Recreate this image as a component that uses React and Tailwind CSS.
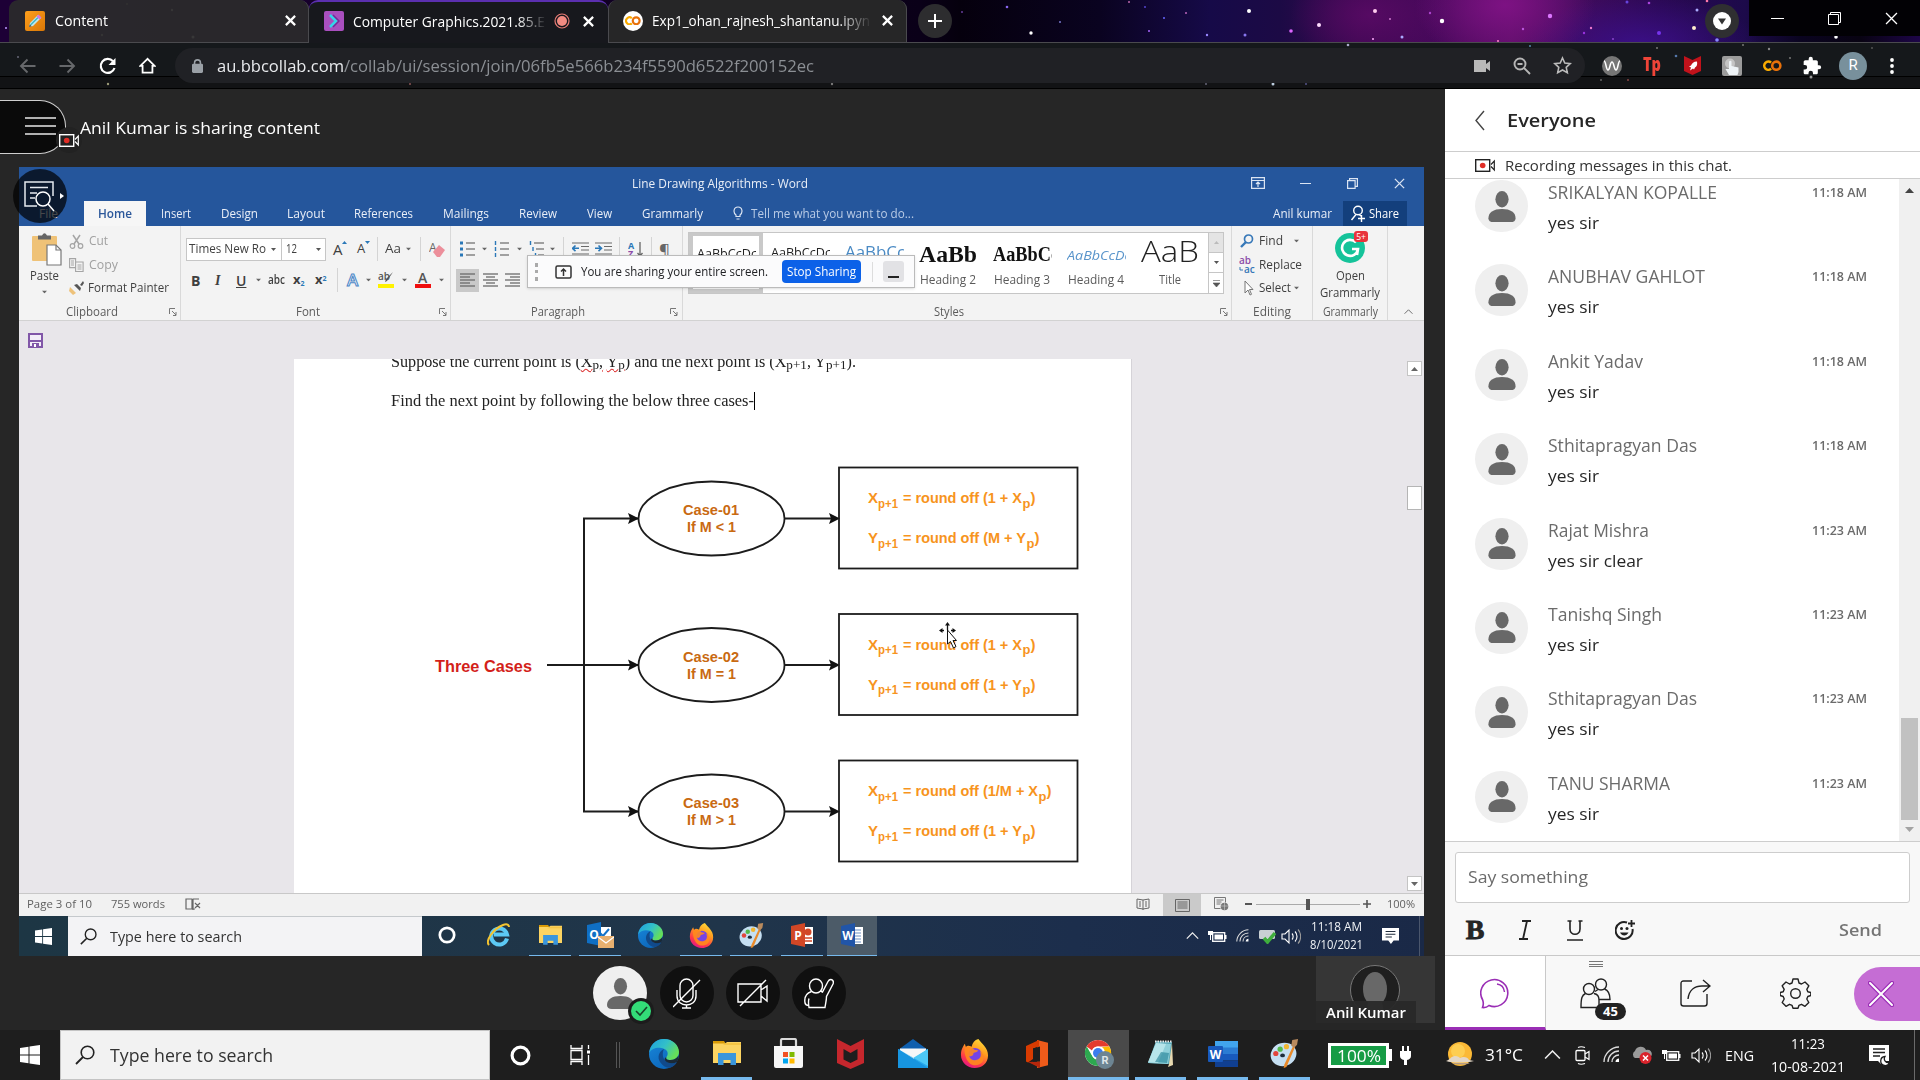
import React, { useLayoutEffect, useRef, useState } from "react";

/* Text set to an exact measure: the glyph run is condensed or widened to w. */
function Fit({ w, c = "", children }) {
  const ref = useRef(null);
  const [k, setK] = useState(1);
  useLayoutEffect(() => {
    if (ref.current && ref.current.offsetWidth) {
      setK(w / ref.current.getBoundingClientRect().width);
    }
  }, []);
  return (
    <span className={"block shrink-0 whitespace-nowrap text-left " + c} style={{ width: w }}>
      <span ref={ref} className="inline-block origin-left" style={{ transform: `scaleX(${k})` }}>
        {children}
      </span>
    </span>
  );
}

const Slot = ({ c = "", children }) => (
  <div className={"flex shrink-0 items-center justify-center " + c}>{children}</div>
);

const Svg = ({ w, h, vb, c = "", children }) => (
  <svg width={w} height={h} viewBox={vb || `0 0 ${w} ${h}`} className={"block shrink-0 " + c} fill="none">
    {children}
  </svg>
);

const Caret = ({ c = "" }) => (
  <Svg w={7} h={4} c={c}>
    <path d="M0 0h7L3.500 4z" fill="#666" />
  </Svg>
);

const CloseX = ({ s = 11, sw = 2, color = "#fff", c = "" }) => (
  <Svg w={s} h={s} vb="0 0 10 10" c={c}>
    <path d="M.8.8l8.400 8.400M9.200.8L.8 9.200" stroke={color} strokeWidth={sw} />
  </Svg>
);

/* ---------- application icons ---------- */
const WinLogo = ({ s }) => (
  <Svg w={s} h={s} vb="0 0 20 20">
    <path d="M0 3l8.500-1.200v7.700H0zM9.500 1.600L20 0v9.500H9.500zM0 10.500h8.500v7.700L0 17zM9.500 10.500H20V20L9.500 18.400z" fill="#fff" />
  </Svg>
);
const Magnifier = ({ s, color = "#222" }) => (
  <Svg w={s} h={s} vb="0 0 20 20">
    <circle cx="12.500" cy="7.500" r="6.300" stroke={color} strokeWidth="1.600" />
    <path d="M8 12L1 19" stroke={color} strokeWidth="1.800" />
  </Svg>
);
const Ring = ({ s }) => (
  <Svg w={s} h={s} vb="0 0 20 20">
    <circle cx="10" cy="10" r="8" stroke="#fff" strokeWidth="3" />
  </Svg>
);
const Edge = ({ s }) => (
  <Svg w={s} h={s} vb="0 0 30 30">
    <defs>
      <linearGradient id="eg1" x1="0" y1="0" x2="1" y2="0.5">
        <stop offset="0" stopColor="#1d9fe0" />
        <stop offset="0.55" stopColor="#33c0c8" />
        <stop offset="1" stopColor="#66df58" />
      </linearGradient>
      <linearGradient id="eg2" x1="0" y1="0" x2="0.7" y2="1">
        <stop offset="0" stopColor="#1988db" />
        <stop offset="1" stopColor="#0b64b8" />
      </linearGradient>
    </defs>
    <circle cx="15" cy="15" r="15" fill="url(#eg2)" />
    <path d="M0.2 14C1 6 7 0 15 0c9 0 15 6.500 15 13 0 5-4 8-8.500 8-4 0-5-1.500-4-3 1.500-2 1.500-4 .5-6C16 8.500 4 6 0.200 14z" fill="url(#eg1)" />
    <path d="M15 10c-5 2-7 8-4 13 3 4.500 8 7 12 5 2-1 4-3 5-5-4 2-9 1.500-11.500-1-3-3-3.500-8-1.500-12z" fill="#114a8b" />
    <path d="M17.500 18c-1 1.500 0 3 4 3 3.500 0 6.500-2 8-4.500 0 3-.5 4.500-1.500 6.500-4 2-9 1.500-11.500-1-1.500-1.600-1-3 1-4z" fill="#1e1e1e" fillOpacity=".85" />
  </Svg>
);
const Folder = ({ s }) => (
  <Svg w={s} h={s * 0.86} vb="0 0 28 24">
    <path d="M0 0h11l2 3H0z" fill="#d99a06" />
    <path d="M0 2.500h12l2-1.500h14v21H0z" fill="#fcd462" />
    <path d="M0 4h10l3-2h15v2z" fill="#e9a80e" opacity=".35" />
    <path d="M5 24V12h18v12h-5.500v-5h-7v5z" fill="#3a96dd" />
  </Svg>
);
const Store = () => (
  <Svg w={29} h={31}>
    <path d="M7 10V2.500Q7 1 8.500 1h12Q22 1 22 2.500V10" stroke="#d8d8d8" strokeWidth="2.200" />
    <path d="M0 8h29v20a2 2 0 0 1-2 2H2a2 2 0 0 1-2-2z" fill="#f6f6f6" />
    <path d="M9 14h5v5H9z" fill="#f25022" />
    <path d="M15.500 14h5v5h-5z" fill="#7fba00" />
    <path d="M9 20.500h5v5H9z" fill="#00a4ef" />
    <path d="M15.500 20.500h5v5h-5z" fill="#ffb900" />
  </Svg>
);
const Mcafee = () => (
  <Svg w={27} h={30}>
    <path d="M0 0l13.500 7L27 0v24l-13.500 6L0 24zM6.500 10v10.500l7 3.500 7-3.500V10l-7 4z" fill="#c6272d" fillRule="evenodd" />
  </Svg>
);
const MailApp = () => (
  <Svg w={30} h={29}>
    <path d="M0 11L15 0l15 11v4H0z" fill="#0f5fae" />
    <path d="M2 9.500h26V20H2z" fill="#f5f7f8" />
    <path d="M0 10l15 10L30 10v19H0z" fill="#27a9ec" />
    <path d="M0 10l30 17V10L15 19z" fill="#4cc8f6" />
    <path d="M0 10v19h30L13 18z" fill="#1795e0" />
  </Svg>
);
const Firefox = ({ s }) => (
  <Svg w={s} h={s} vb="0 0 30 30">
    <defs>
      <linearGradient id="ff1" x1="0.8" y1="0" x2="0.3" y2="1">
        <stop offset="0" stopColor="#ffe13a" />
        <stop offset="0.4" stopColor="#ff9a1f" />
        <stop offset="0.75" stopColor="#ff3b47" />
        <stop offset="1" stopColor="#e31587" />
      </linearGradient>
    </defs>
    <path d="M19 0c2 3 4 4 6 7 2.500 3 4 6 4 10 0 8-6.500 13-14 13S1 24 1 16.500C1 11 3 8 5 5l1 3 2-1c1 0 3 .5 4 1 1-4 3-7 7-8z" fill="url(#ff1)" />
    <circle cx="15.500" cy="16" r="6.800" fill="#7543e5" />
    <path d="M5 9c4-2 8 0 10 2l4 1c-2 2-3 2-5 2.500 0 3-3 4-4.500 3 1 4 5 5 8 4 4-1 5-5 3-9 5 3 5 9 2 12s-9 4-13 0C6 21 4 14 5 9z" fill="#ff8a1d" opacity=".9" />
  </Svg>
);
const Office = () => (
  <Svg w={24} h={28}>
    <path d="M12 0L23 2.800v22.400L12 28z" fill="#ee5b1a" />
    <path d="M1 6L14 0v6.500L8 8.500v10.500l-5 3.500-2-1z" fill="#d83b01" />
    <path d="M3 22l12-.5V28z" fill="#b7270b" />
    <path d="M8 8.500l7-2V21.500l-7 .3z" fill="#1e1e1e" />
  </Svg>
);
const Chrome = () => (
  <Svg w={30} h={30}>
    <circle cx="14" cy="14" r="13" fill="#fff" />
    <path d="M2.700 7.500A13 13 0 0 1 25.300 7.500H14a6.500 6.500 0 0 0-6 4z" fill="#e33b2e" />
    <path d="M2.700 7.500A13 13 0 0 0 14 27l5-8.500A6.500 6.500 0 0 1 8.500 17.500z" fill="#2da94f" />
    <path d="M25.300 7.500A13 13 0 0 1 14 27l5.500-9.500A6.500 6.500 0 0 0 18 8z" fill="#fdbd00" />
    <circle cx="14" cy="14" r="6.500" fill="#fff" />
    <circle cx="14" cy="14" r="5" fill="#3b7ded" />
    <circle cx="21" cy="21" r="9" fill="#6d8593" />
    <text x="21" y="25" textAnchor="middle" fontSize="11" fontWeight="700" fill="#dfe6ea" fontFamily="Roboto">R</text>
  </Svg>
);
const Notepad = () => (
  <Svg w={27} h={28}>
    <path d="M9 1l16 1-2 22-22-1z" fill="#59a8b8" />
    <path d="M9 3l15 1-3 20-20-1z" fill="#8fd0da" />
    <path d="M9 3l10 1-8 19-10-1z" fill="#c8eef2" opacity=".7" />
    <path d="M14 12l8 1-2 10-12-1z" fill="#1f7f95" opacity=".6" />
    <path d="M25 3l1 22-5 2 1-3z" fill="#e8d9b0" />
    <path d="M8 1.500h17" stroke="#e9e9e9" strokeWidth="2" strokeDasharray="1.500 1" />
  </Svg>
);
const WordNew = () => (
  <Svg w={30} h={26}>
    <path d="M7 0h23v7H7z" fill="#41a5ee" />
    <path d="M7 6.500h23V13H7z" fill="#2b7cd3" />
    <path d="M7 13h23v6.500H7z" fill="#185abd" />
    <path d="M7 19.500h23V26H7z" fill="#103f91" />
    <rect y="5" width="15" height="16" rx="1" fill="#185abd" />
    <text x="7.500" y="17.500" textAnchor="middle" fontSize="12" fontWeight="700" fill="#fff" fontFamily="Open Sans">W</text>
  </Svg>
);
const Paint = ({ s }) => (
  <Svg w={s} h={s} vb="0 0 30 30">
    <ellipse cx="14" cy="16" rx="13.500" ry="12" fill="#c5dff2" transform="rotate(-20 14 16)" />
    <ellipse cx="13" cy="17" rx="2.500" ry="2" fill="#1e2d3c" />
    <circle cx="6" cy="15" r="2.700" fill="#e2453c" />
    <circle cx="10.500" cy="10.500" r="2.700" fill="#54b948" />
    <circle cx="17" cy="8" r="2.700" fill="#f1b632" />
    <path d="M24 7l2 1-9 21-3 1 1-4z" fill="#e98a2a" />
    <path d="M23 1l6-1-1 6-3 3-3-2z" fill="#b98a5d" />
  </Svg>
);
const IE = () => (
  <Svg w={24} h={24}>
    <path d="M20 15.500A8 8 0 1 1 20 11.500H7" stroke="#5cc9f5" strokeWidth="4" />
    <path d="M2 22C-2 18 6 6 16 2c3-1.200 6-1 6 2" stroke="#f4c430" strokeWidth="2" />
  </Svg>
);
const OfficeOld = ({ letter, color, children }) => (
  <Svg w={23} h={24} vb="0 0 23 24">
    <path d="M11 4h11v17H11z" fill="#fff" />
    {children}
    <path d="M0 3l14-3v24L0 21z" fill={color} />
    <text x="7" y="16.500" textAnchor="middle" fontSize="12" fontWeight="700" fill="#fff" fontFamily="Open Sans">{letter}</text>
  </Svg>
);
const Person = ({ w, h, c = "" }) => (
  <Svg w={w} h={h} vb="0 0 28 32" c={c}>
    <ellipse cx="14" cy="8.500" rx="6.800" ry="8.500" fill="#686868" />
    <path d="M0 28c0-6 5-9.500 14-9.500S28 22 28 28c0 3-2 4-5 4H5c-3 0-5-1-5-4z" fill="#686868" />
  </Svg>
);
const Rec = ({ color = "#222", w = 20 }) => (
  <Svg w={w} h={w * 0.65} vb="0 0 20 13">
    <rect x=".7" y=".7" width="14" height="11.600" stroke={color} strokeWidth="1.400" />
    <path d="M16 5.500l3.300-3.500v9L16 7.500" stroke={color} strokeWidth="1.200" />
    <circle cx="7.700" cy="6.500" r="2.800" fill="#e02d26" />
  </Svg>
);
const Wifi = ({ s = 18 }) => (
  <Svg w={s} h={s} vb="0 0 18 18">
    <path d="M1 16C1 8 8 1 16 1M5 16C5 10 10 5 16 5M9 16c0-4 3-7 7-7" stroke="#ddd" strokeWidth="1.300" />
    <path d="M12.500 16c0-2 1.500-3.500 3.500-3.500V16z" fill="#fff" />
  </Svg>
);
const Battery = () => (
  <Svg w={19} h={13}>
    <rect x="4.700" y="2.700" width="12" height="8.600" stroke="#fff" strokeWidth="1.300" />
    <path d="M6.500 4.500h8.500v5H6.500zM17 5h1.500v4H17zM0 1h5v4H3v5H2V5H0z" fill="#fff" />
  </Svg>
);
const Volume = () => (
  <Svg w={20} h={17}>
    <path d="M1 6h3l4-4v13l-4-4H1z" stroke="#fff" strokeWidth="1.100" />
    <path d="M11 5.500c1.500 1.500 1.500 4.500 0 6M14 3.500c2.700 2.700 2.700 7.300 0 10" stroke="#fff" strokeWidth="1.100" />
    <path d="M17 1.500c3.500 3.500 3.500 10.500 0 14" stroke="#999" strokeWidth="1.100" />
  </Svg>
);
const UpChevron = ({ color = "#eee", w = 15 }) => (
  <Svg w={w} h={w / 2 + 1} vb="0 0 16 9">
    <path d="M1 8l7-7 7 7" stroke={color} strokeWidth="1.500" />
  </Svg>
);
const Notif = ({ s = 19 }) => (
  <Svg w={s} h={s} vb="0 0 19 19">
    <path d="M0 0h19v14h-6l-3 4-3-4H0z" fill="#fff" />
    <path d="M4 4h11M4 7h11M4 10h7" stroke="#1e2a3a" strokeWidth="1.200" />
  </Svg>
);
const Colab = ({ s = 19 }) => (
  <Svg w={s} h={s * 0.6} vb="0 0 20 12">
    <path d="M8.500 2.800A4.300 4.300 0 1 0 8.500 9.200" stroke="#f9ab00" strokeWidth="2.700" />
    <circle cx="14" cy="6" r="4.300" stroke="#e8710a" strokeWidth="2.700" />
  </Svg>
);

/* ---------- browser ---------- */
const STARS = [
  [6, 28, 1, "#b9f"], [172, 10, 1.200, "#999"], [102, 35, 1.200, "#888"], [193, 37, 1.500, "#aaa"], [127, 4, 1, "#666"],
  [460, 34, 1.200, "#89b"], [630, 41, 1, "#667"], [752, 24, 1, "#777"], [962, 12, 0.800, "#a6f"], [1007, 7, 1.300, "#86e"], [1031, 33, 1.700, "#fff"], [1060, 22, 1, "#77c"],
  [1129, 2, 1, "#b6a"], [1145, 7, 1, "#54c"], [1164, 18, 1, "#66f"], [1149, 31, 1, "#a6f"], [1186, 13, 1, "#b6b"], [1207, 35, 1.200, "#98f"], [1245, 35, 1.500, "#87e"],
  [1249, 11, 2, "#fff"], [1291, 31, 1.800, "#d6f"], [1319, 25, 2, "#fdf"], [1375, 11, 2, "#fce"], [1390, 19, 1, "#c7c"], [1373, 39, 1, "#faf"], [1442, 21, 2.200, "#fff"],
  [1402, 37, 1.500, "#aaf"], [1430, 13, 1.200, "#a4c"], [1498, 41, 1, "#f8c"], [1523, 29, 1.200, "#b5d"], [1550, 16, 2.200, "#d7f"], [1584, 33, 1.200, "#93d"], [1591, 28, 1.200, "#e7c"],
  [1627, 2, 1.500, "#64d"], [1649, 3, 1.300, "#a4d"], [1659, 33, 2, "#73e"], [1613, 39, 1, "#84c"], [1694, 28, 2, "#fec"], [1697, 10, 1.500, "#aaf"], [1707, 1, 1.300, "#f7a"], [1717, 40, 1.800, "#88f"],
  [1836, 37, 1.800, "#fff"],
];
const BAR_STARS = [
  [18, 14, 1, "#667"], [108, 41, 1.200, "#997"], [410, 41, 1, "#855"], [1348, 2, 1.300, "#aac"], [1273, 41, 1.500, "#bcd"], [832, 41, 1.200, "#777"],
  [1206, 41, 1, "#667"], [1306, 41, 1, "#558"], [1530, 3, 1, "#58a"], [1657, 5, 1, "#777"], [1743, 2, 1, "#777"], [1769, 6, 1.200, "#888"], [1676, 13, 1.300, "#57a"],
  [1628, 37, 1, "#844"], [1790, 15, 1, "#777"], [1811, 34, 1.500, "#999"], [1872, 5, 1, "#555"], [1601, 37, 1, "#666"],
];
const StarField = ({ list, h }) => (
  <svg width="1920" height={h} className="absolute inset-0">
    {list.map(([x, y, r, f], i) => (
      <circle key={i} cx={x} cy={y} r={r} fill={f} />
    ))}
  </svg>
);

function TabStrip() {
  return (
    <div className="relative flex h-[43px] border-b border-[#4a4a4e] bg-[radial-gradient(90px_60px_at_1505px_5px,#7d1283_0%,transparent_100%),radial-gradient(120px_50px_at_1640px_45px,#3a0f86_0%,transparent_100%),radial-gradient(80px_50px_at_1370px_15px,#560a63_0%,transparent_100%),linear-gradient(90deg,#1d0036_0px,#1d0036_10px,#0a0018_920px,#05000d_960px,#0a0320_1100px,#160a48_1210px,#1c0a45_1280px,#3b0850_1360px,#45085a_1430px,#5a0e66_1510px,#400b5c_1580px,#2a0852_1660px,#1c0a4a_1745px,#0a0420_1800px,#080312_1860px,#1d0548_1920px)] text-[15px] text-white">
      <StarField list={STARS} h={42} />
      <div className="relative ml-[9px] flex h-full w-[300px] items-center rounded-t-[9px] border-r border-[#4a4a4e] bg-[#2b2b2b]/90 pb-[1px]">
        <div className="ml-[16px] flex h-[20px] w-[20px] items-center justify-center rounded-[2px] bg-[linear-gradient(135deg,#ff9f1c,#d97706)]">
          <Svg w={16} h={16}>
            <path d="M2 14l1-4 8-8 3 3-8 8z" fill="#bfe9ef" />
            <path d="M3.500 12l7.500-7.500" stroke="#3fb6c4" strokeWidth="1.500" />
            <path d="M9.500 3.500l2-2 3 3-2 2z" fill="#d679d8" />
            <path d="M2 14l.8-2.600 1.800 1.800z" fill="#444" />
          </Svg>
        </div>
        <Fit w={53} c="ml-[10px]">Content</Fit>
        <CloseX c="ml-[177px]" />
      </div>
      <div className="relative flex h-[43px] w-[299px] items-center rounded-t-[9px] border-t-2 border-[#5b2fb0] bg-[#17181d] pb-[3px]">
        <div className="ml-[15px] flex h-[20px] w-[20px] items-center justify-center rounded-[2px] bg-[#a94fbf]">
          <Svg w={12} h={14}>
            <path d="M2 1l6 6-6 6" stroke="#35d6e8" strokeWidth="2.500" />
            <path d="M5 1l6 6-6 6" stroke="#6f2f97" strokeWidth="1.500" />
          </Svg>
        </div>
        <div className="ml-[9px] w-[192px] overflow-hidden [mask-image:linear-gradient(90deg,#000_165px,transparent_194px)]">
          <Fit w={192}>Computer Graphics.2021.85.E</Fit>
        </div>
        <Svg w={16} h={16} c="ml-[9px]">
          <circle cx="8" cy="8" r="7" stroke="#e87c76" strokeWidth="1.200" />
          <circle cx="8" cy="8" r="5" fill="#f28b82" />
        </Svg>
        <CloseX c="ml-[13px]" />
      </div>
      <div className="relative flex h-full w-[299px] items-center rounded-t-[9px] border-l border-r border-[#4a4a4e] bg-[#282828]/95 pb-[1px]">
        <Slot c="ml-[14px] h-[20px] w-[20px] rounded-full bg-white">
          <Colab s={16} />
        </Slot>
        <div className="ml-[9px] w-[218px] overflow-hidden [mask-image:linear-gradient(90deg,#000_185px,transparent_220px)]">
          <Fit w={218}>Exp1_ohan_rajnesh_shantanu.ipyn</Fit>
        </div>
        <CloseX c="ml-[12px]" />
      </div>
      <Slot c="relative ml-[11px] mt-[4px] h-[34px] w-[34px] rounded-full bg-[#2d2d2f]">
        <Svg w={16} h={16}>
          <path d="M8 1v14M1 8h14" stroke="#fff" strokeWidth="2" />
        </Svg>
      </Slot>
      <Slot c="relative ml-[753px] mt-[4px] h-[34px] w-[34px] rounded-full bg-[#2f2f31]">
        <Svg w={18} h={18}>
          <circle cx="9" cy="9" r="9" fill="#fff" />
          <path d="M5 6.500h8L9 12.500z" fill="#333" />
        </Svg>
      </Slot>
      <div className="relative ml-auto flex h-[36px] w-[171px] bg-[#020105]">
        <Slot c="w-[57px]">
          <div className="h-[1px] w-[13px] bg-white" />
        </Slot>
        <Slot c="w-[57px]">
          <Svg w={13} h={13}>
            <path d="M.5 2.500h10v10H.5zM2.500 2.500v-2h10v10h-2" stroke="#fff" />
          </Svg>
        </Slot>
        <Slot c="w-[57px]">
          <CloseX s={13} sw={1} />
        </Slot>
      </div>
    </div>
  );
}

function Toolbar() {
  return (
    <div className="relative flex h-[46px] items-center border-b border-black bg-[#15181b]">
      <div className="absolute inset-x-0 top-[33px] h-[12px] border-t border-black bg-[#121315]" />
      <StarField list={BAR_STARS} h={45} />
      <Slot c="relative ml-[17px] w-[20px]">
        <Svg w={17} h={16}>
          <path d="M16.500 8H2M8.500 1.500L2 8l6.500 6.500" stroke="#66686b" strokeWidth="1.900" />
        </Svg>
      </Slot>
      <Slot c="relative ml-[20px] w-[20px]">
        <Svg w={17} h={16}>
          <path d="M.5 8H15M8.500 1.500L15 8l-6.500 6.500" stroke="#66686b" strokeWidth="1.900" />
        </Svg>
      </Slot>
      <Slot c="relative ml-[21px] w-[20px]">
        <Svg w={18} h={18}>
          <path d="M15.500 11A7 7 0 1 1 14 4.200" stroke="#fff" strokeWidth="2.200" />
          <path d="M16.500 1v7h-7z" fill="#fff" />
        </Svg>
      </Slot>
      <Slot c="relative ml-[19px] w-[20px]">
        <Svg w={17} h={17} vb="0 0 19 18">
          <path d="M9.500 1.500L1.500 9.500H4V17h11V9.500h2.500z" stroke="#fff" strokeWidth="2" />
        </Svg>
      </Slot>
      <div className="relative ml-[18px] flex h-[35px] w-[1410px] items-center rounded-full bg-[#202125] text-[16px]">
        <Svg w={11} h={14} vb="0 0 12 15" c="ml-[17px]">
          <rect y="5" width="12" height="10" rx="1.500" fill="#9aa0a6" />
          <path d="M2.800 6V4a3.200 3.200 0 0 1 6.400 0v2" stroke="#9aa0a6" strokeWidth="1.700" />
        </Svg>
        <Fit w={127} c="ml-[14px] text-[#e8eaed]">au.bbcollab.com</Fit>
        <Fit w={470} c="text-[#8b8f94]">/collab/ui/session/join/06fb5e566b234f5590d6522f200152ec</Fit>
        <Svg w={16} h={12} c="ml-[660px]">
          <path d="M0 0h12v4l4-3v10l-4-3v4H0z" fill="#b9b9b9" />
        </Svg>
        <Svg w={18} h={18} c="ml-[23px]">
          <circle cx="7" cy="7" r="5.500" stroke="#b5b5b5" strokeWidth="1.900" />
          <path d="M4.500 7h5M11 11l6 6" stroke="#b5b5b5" strokeWidth="1.900" />
        </Svg>
        <Svg w={19} h={19} vb="0 0 24 24" c="ml-[22px]">
          <path d="M12 2.500l2.900 6.300 6.900.8-5.100 4.700 1.400 6.800L12 17.700l-6.100 3.400 1.400-6.800L2.200 9.600l6.900-.8z" stroke="#bbb" strokeWidth="2" />
        </Svg>
      </div>
      <Slot c="relative ml-[17px] h-[20px] w-[20px] rounded-full bg-[#767676]">
        <Svg w={18} h={12}>
          <path d="M1 1c2 0 2 9 4 9s2-8 4-8 2 8 4 8 2-9 4-9" stroke="#fff" strokeWidth="1.500" />
        </Svg>
      </Slot>
      <Slot c="relative ml-[20px] w-[20px] pb-[3px]">
        <Fit w={18} c="text-[19px] leading-[20px] font-extrabold text-[#f04438]">Tp</Fit>
      </Slot>
      <Slot c="relative ml-[20px] w-[20px]">
        <Svg w={17} h={19}>
          <path d="M0 0l8.500 4L17 0v15l-8.500 4L0 15z" fill="#c1121b" />
          <path d="M13 5.500c-3.500 0-5 2-6 4l-2 1 2 1-1 3 3-2 1 1 1-2c2-1 2.500-3 2-6z" fill="#fff" />
        </Svg>
      </Slot>
      <Slot c="relative ml-[20px] h-[20px] w-[20px] rounded-[2px] bg-[#9b9b9b]">
        <Svg w={18} h={18}>
          <circle cx="7" cy="6.500" r="5" fill="#c4c4c4" />
          <path d="M6 4.500q1.500-1.500 2.500 0V9l7 1.500V15l-1 3H6l-3.500-6H6z" fill="#eef3f6" />
        </Svg>
      </Slot>
      <Slot c="relative ml-[20px] w-[20px]">
        <Colab />
      </Slot>
      <Slot c="relative ml-[20px] w-[20px]">
        <Svg w={20} h={20} vb="0 0 24 24">
          <path d="M20.500 11H19V7c0-1.100-.9-2-2-2h-4V3.500a2.500 2.500 0 0 0-5 0V5H4c-1.100 0-2 .9-2 2v3.800h1.500a2.700 2.700 0 0 1 0 5.400H2V20c0 1.100.9 2 2 2h3.800v-1.500a2.700 2.700 0 0 1 5.400 0V22H17c1.100 0 2-.9 2-2v-4h1.500a2.500 2.500 0 0 0 0-5z" fill="#fff" />
        </Svg>
      </Slot>
      <Slot c="relative ml-[17px] h-[28px] w-[28px] rounded-full bg-[#78909c]">
        <span className="font-['Roboto'] text-[15px] leading-none text-white">R</span>
      </Slot>
      <Svg w={4} h={18} c="relative ml-[23px]">
        <circle cx="2" cy="3" r="1.900" fill="#fff" />
        <circle cx="2" cy="9" r="1.900" fill="#fff" />
        <circle cx="2" cy="15" r="1.900" fill="#fff" />
      </Svg>
    </div>
  );
}

/* ---------- Word window ---------- */
const Launcher = ({ c }) => (
  <Svg w={8} h={8} c={c}>
    <path d="M.5 6V.5H6M3 3l4 4M7 4v3.500H4" stroke="#777" />
  </Svg>
);
const VSep = ({ c }) => <div className={"h-[24px] w-[1px] shrink-0 bg-[#d4d4d4] " + c} />;
const Lines = ({ rows, c }) => (
  <Svg w={16} h={14} c={c}>
    {rows.map(([a, b], i) => (
      <path key={i} d={`M${a} ${i * 3 + 1}H${b}`} stroke="#6a6a6a" strokeWidth="1.300" />
    ))}
  </Svg>
);

function ClipboardGroup() {
  return (
    <div className="flex h-full w-[162px] flex-col border-r border-[#d9d9d9]">
      <div className="flex h-[78px]">
        <div className="ml-[11px] w-[32px] pt-[7px]">
          <Svg w={30} h={33} c="ml-[2px]">
            <rect y="3" width="25" height="25" rx="1" fill="#efc277" />
            <path d="M6 2.500h4Q12.500-2 15 2.500h4v4H6z" fill="#666" />
            <path d="M15 12h9l5 5v15H15z" fill="#fff" stroke="#777" strokeWidth="1.200" />
            <path d="M24 12v5h5" stroke="#777" strokeWidth="1.200" />
          </Svg>
          <Fit w={29} c="mt-[2px] leading-[16px]">Paste</Fit>
          <Caret c="ml-[11px] mt-[6px] scale-75" />
        </div>
        <div className="ml-[7px] pt-[4px]">
          <div className="flex h-[22px] items-center text-[#a0a0a0]">
            <Svg w={15} h={15}>
              <path d="M4 1l6 9M11 1L5 10" stroke="#a5a5a5" strokeWidth="1.500" />
              <circle cx="3.500" cy="12" r="2.300" stroke="#a5a5a5" strokeWidth="1.200" />
              <circle cx="11.500" cy="12" r="2.300" stroke="#a5a5a5" strokeWidth="1.200" />
            </Svg>
            <Fit w={19} c="ml-[5px]">Cut</Fit>
          </div>
          <div className="flex h-[25px] items-center text-[#a0a0a0]">
            <Svg w={15} h={14}>
              <path d="M.6.600h6v9h-6zM6.600 4h7.500v9.500H6.600z" fill="#f3f3f3" stroke="#a5a5a5" strokeWidth="1.100" />
              <path d="M8.500 7h4M8.500 9h4M8.500 11h4M2 3h3M2 5h3M2 7h3" stroke="#a5a5a5" />
            </Svg>
            <Fit w={29} c="ml-[5px]">Copy</Fit>
          </div>
          <div className="flex h-[22px] items-center">
            <Svg w={15} h={14}>
              <path d="M1 6l6 6-3 2-4-4z" fill="#eec27a" />
              <path d="M5 4l6 6 1-3-4-4zM11 4l3-4 1 2-2 3z" fill="#555" />
            </Svg>
            <Fit w={81} c="ml-[4px]">Format Painter</Fit>
          </div>
        </div>
      </div>
      <div className="flex h-[15px] items-center">
        <Fit w={52} c="ml-[47px] text-[#5a5a5a]">Clipboard</Fit>
        <Launcher c="ml-[51px]" />
      </div>
    </div>
  );
}

function FontGroup() {
  return (
    <div className="flex h-full w-[270px] flex-col border-r border-[#d9d9d9] pt-[10px]">
      <div className="flex h-[26px] items-center">
        <div className="ml-[5px] flex h-[23px] w-[96px] items-center border border-[#c6c6c6] bg-white">
          <Fit w={77} c="ml-[2px]">Times New Ro</Fit>
          <Svg w={5} h={3} c="ml-[5px]"><path d="M0 0h5L2.500 3z" fill="#555" /></Svg>
        </div>
        <div className="flex h-[23px] w-[44px] items-center border border-l-0 border-[#c6c6c6] bg-white">
          <Fit w={11} c="ml-[4px]">12</Fit>
          <Svg w={5} h={3} c="ml-[19px]"><path d="M0 0h5L2.500 3z" fill="#555" /></Svg>
        </div>
        <span className="ml-[7px] w-[9px] text-[15px]">A</span>
        <Svg w={5} h={3} c="-mt-[14px]"><path d="M0 3h5L2.500 0z" fill="#2a78b8" /></Svg>
        <span className="ml-[10px] w-[8px] text-[13px]">A</span>
        <Svg w={5} h={3} c="-mt-[14px]"><path d="M0 0h5L2.500 3z" fill="#2a78b8" /></Svg>
        <VSep c="ml-[7px]" />
        <Fit w={16} c="ml-[7px] text-[13px]">Aa</Fit>
        <Caret c="ml-[4px] scale-75" />
        <VSep c="ml-[8px]" />
        <Svg w={16} h={17} c="ml-[8px]">
          <text x="0" y="11" fontSize="12" fontFamily="Open Sans" fill="#666">A</text>
          <path d="M4 11l6-7 6 5-5 7H8z" fill="#ec8f9b" />
        </Svg>
      </div>
      <div className="mt-[5px] flex h-[26px] items-center text-[14px]">
        <b className="ml-[10px] w-[10px]">B</b>
        <i className="ml-[14px] w-[8px] font-['Liberation_Serif'] font-bold">I</i>
        <span className="ml-[13px] w-[10px] font-semibold underline">U</span>
        <Caret c="ml-[9px] scale-75" />
        <Fit w={17} c="ml-[6px] text-[12px] font-semibold line-through">abc</Fit>
        <span className="ml-[8px] w-[12px] text-[13px] font-bold">x<sub className="text-[7px] text-[#2a78b8]">2</sub></span>
        <span className="ml-[10px] w-[13px] text-[13px] font-bold">x<sup className="text-[7px] text-[#2a78b8]">2</sup></span>
        <VSep c="ml-[9px]" />
        <span className="ml-[9px] w-[13px] text-[17px] font-semibold text-[#f3f3f3] [-webkit-text-stroke:1px_#4a86c8]">A</span>
        <Caret c="ml-[5px] scale-75" />
        <Svg w={17} h={18} c="ml-[6px]">
          <text x="0" y="9" fontSize="10" fontFamily="Open Sans" fill="#555" fontWeight="600">ab</text>
          <path d="M15 1L9 10l-2 1 1-3z" fill="#555" />
          <path d="M0 13h16v4H0z" fill="#fff200" />
        </Svg>
        <Caret c="ml-[6px] scale-75" />
        <Svg w={17} h={18} c="ml-[7px]">
          <text x="3" y="12" fontSize="14" fontFamily="Open Sans" fill="#555" fontWeight="600">A</text>
          <path d="M0 13h16v4H0z" fill="#f00f0f" />
        </Svg>
        <Caret c="ml-[6px] scale-75" />
      </div>
      <div className="mt-[11px] flex h-[15px] items-center">
        <Fit w={24} c="ml-[115px] text-[#5a5a5a]">Font</Fit>
        <Launcher c="ml-[119px]" />
      </div>
    </div>
  );
}

const ListIcon = ({ kind, c }) => (
  <Svg w={16} h={16} c={c}>
    {[1, 7, 13].map((y, i) => (
      <g key={y}>
        <path d={`M${kind === 2 ? 5 + i * 2 : 6} ${y + 1}H15`} stroke="#6a6a6a" strokeWidth="1.200" />
        {kind === 0 ? (
          <rect x="0" y={y - 0.5} width="3" height="3" fill="#2a78b8" />
        ) : (
          <path d={`M${kind === 2 ? 1.500 + i * 2.500 : 1.500} ${y - 1}v4`} stroke="#2a78b8" strokeWidth="1.400" />
        )}
      </g>
    ))}
  </Svg>
);
const Indent = ({ c, flip }) => (
  <Svg w={17} h={14} c={c}>
    <path d="M0 1h17M9 4.500h8M9 8h8M0 12h17" stroke="#6a6a6a" strokeWidth="1.200" />
    <path d={flip ? "M0 6.300h6M3.500 3.500l3 2.800-3 2.800" : "M7 6.300H1M3.500 3.500l-3 2.800 3 2.800"} stroke="#2a78b8" strokeWidth="1.600" />
  </Svg>
);

function ParagraphGroup() {
  return (
    <div className="flex h-full w-[232px] flex-col border-r border-[#d9d9d9] pt-[10px]">
      <div className="flex h-[26px] items-center">
        <ListIcon kind={0} c="ml-[9px]" />
        <Caret c="ml-[5px] scale-75" />
        <ListIcon kind={1} c="ml-[6px]" />
        <Caret c="ml-[6px] scale-75" />
        <ListIcon kind={2} c="ml-[6px]" />
        <Caret c="ml-[4px] scale-75" />
        <VSep c="ml-[7px]" />
        <Indent c="ml-[8px]" />
        <Indent flip c="ml-[6px]" />
        <VSep c="ml-[7px]" />
        <Svg w={16} h={17} c="ml-[8px]">
          <text x="0" y="8" fontSize="9" fontWeight="700" fontFamily="Open Sans" fill="#2a78b8">A</text>
          <text x="0" y="16" fontSize="9" fontWeight="700" fontFamily="Open Sans" fill="#8b4ba8">Z</text>
          <path d="M12 1v14M9.500 12l2.500 3 2.500-3" stroke="#666" strokeWidth="1.300" />
        </Svg>
        <VSep c="ml-[7px]" />
        <span className="ml-[7px] text-[17px] leading-none text-[#666]">¶</span>
      </div>
      <div className="mt-[5px] flex h-[26px] items-center">
        <Slot c="ml-[5px] h-[23px] w-[23px] bg-[#c9c9c9]">
          <Lines rows={[[0, 15], [0, 10], [0, 15], [0, 10], [0, 15]]} />
        </Slot>
        <Lines rows={[[0, 15], [3, 12], [0, 15], [3, 12], [0, 15]]} c="ml-[4px]" />
        <Lines rows={[[0, 15], [5, 15], [0, 15], [5, 15], [0, 15]]} c="ml-[6px]" />
      </div>
      <div className="mt-[11px] flex h-[15px] items-center">
        <Fit w={54} c="ml-[80px] text-[#5a5a5a]">Paragraph</Fit>
        <Launcher c="ml-[85px]" />
      </div>
    </div>
  );
}

const StyleTile = ({ w, sample, sc, lw, label, sel }) => (
  <div className={"flex w-[74px] flex-col items-center overflow-hidden " + (sel ? "border-[4px] border-t-[3px] border-[#c9c9c9]" : "pt-[2px]")}>
    <div className="flex h-[34px] w-[59px] items-end overflow-hidden">
      <Fit w={w} c={sc}>{sample}</Fit>
    </div>
    {label && <Fit w={lw} c="mt-[3px] leading-[16px] text-[#5a5a5a]">{label}</Fit>}
  </div>
);

function StylesGroup() {
  return (
    <div className="flex h-full w-[549px] flex-col border-r border-[#d9d9d9] pt-[6px]">
      <div className="ml-[5px] flex h-[62px] w-[536px] border border-[#c6c6c6] bg-white">
        <StyleTile sel w={60} sample="AaBbCcDc" sc="text-[13px] text-[#222] leading-[33px]" />
        <StyleTile w={60} sample="AaBbCcDc" sc="text-[13px] text-[#222] leading-[33px]" />
        <StyleTile w={60} sample="AaBbCc" sc="text-[16px] text-[#4a8ac4] leading-[33px]" />
        <StyleTile w={58} sample="AaBb" sc="font-['Liberation_Serif'] text-[24px] font-bold text-[#111] leading-[30px]" lw={56} label="Heading 2" />
        <StyleTile w={66} sample="AaBbCc" sc="font-['Liberation_Serif'] text-[20px] font-bold text-[#111] leading-[29px]" lw={56} label="Heading 3" />
        <StyleTile w={64} sample="AaBbCcDc" sc="text-[13.500px] italic text-[#5a95cb] leading-[28px]" lw={56} label="Heading 4" />
        <StyleTile w={58} sample="AaB" sc="text-[30px] font-light text-[#222] leading-[37px]" lw={22} label="Title" />
        <div className="ml-auto flex w-[15px] flex-col border-l border-[#c6c6c6]">
          <Slot c="h-[20px] border-b border-[#c6c6c6] bg-[#e4e4e4]"><Svg w={5} h={3}><path d="M0 3h5L2.500 0z" fill="#bbb" /></Svg></Slot>
          <Slot c="h-[20px] border-b border-[#c6c6c6]"><Svg w={5} h={3}><path d="M0 0h5L2.500 3z" fill="#555" /></Svg></Slot>
          <Slot c="h-[20px]"><Svg w={7} h={7}><path d="M0 .5h7M0 3h7L3.500 7z" fill="#555" stroke="#555" strokeWidth=".6" /></Svg></Slot>
        </div>
      </div>
      <div className="mt-[10px] flex h-[15px] items-center">
        <Fit w={30} c="ml-[251px] text-[#5a5a5a]">Styles</Fit>
        <Launcher c="ml-[256px]" />
      </div>
    </div>
  );
}

function EditingGroup() {
  return (
    <div className="flex h-full w-[81px] flex-col border-r border-[#d9d9d9] pt-[3px]">
      <div className="flex h-[23px] items-center">
        <Svg w={14} h={14} c="ml-[8px]">
          <circle cx="8.500" cy="5" r="4" stroke="#3778b8" strokeWidth="1.700" />
          <path d="M6 8l-5 5" stroke="#3778b8" strokeWidth="2.400" />
        </Svg>
        <Fit w={24} c="ml-[5px]">Find</Fit>
        <Caret c="ml-[10px] scale-75" />
      </div>
      <div className="flex h-[25px] items-center">
        <Svg w={17} h={18} c="ml-[7px]">
          <text x="0" y="8" fontSize="10" fontWeight="600" fontFamily="Open Sans" fill="#8b4ba8">ab</text>
          <text x="5" y="17" fontSize="10" fontWeight="600" fontFamily="Open Sans" fill="#3778b8">ac</text>
          <path d="M1 11v3h3" stroke="#3778b8" />
        </Svg>
        <Fit w={43} c="ml-[3px]">Replace</Fit>
      </div>
      <div className="flex h-[22px] items-center">
        <Svg w={10} h={16} c="ml-[12px]">
          <path d="M1 1v12l3-3 2 5 1.500-.7L5.500 9.500H9z" stroke="#777" fill="#fff" />
        </Svg>
        <Fit w={32} c="ml-[5px]">Select</Fit>
        <Caret c="ml-[2px] scale-75" />
      </div>
      <div className="mt-[5px] flex h-[15px] items-center">
        <Fit w={38} c="ml-[21px] text-[#5a5a5a]">Editing</Fit>
      </div>
    </div>
  );
}

function GrammarlyGroup() {
  return (
    <div className="flex h-full w-[75px] flex-col items-center border-r border-[#d9d9d9] pt-[4px]">
      <Svg w={36} h={34}>
        <circle cx="18" cy="18" r="15" fill="#15c39a" />
        <path d="M24 12.500A8 8 0 1 0 26 19h-6M26 19l-1 6" stroke="#fff" strokeWidth="2.600" />
        <rect x="22" y="1" width="14" height="11" rx="3" fill="#e8343c" />
        <text x="29" y="9.500" textAnchor="middle" fontSize="8.500" fill="#fff" fontFamily="Open Sans">5+</text>
      </Svg>
      <Fit w={29} c="mt-[3px] leading-[17px]">Open</Fit>
      <Fit w={60} c="leading-[17px]">Grammarly</Fit>
      <Fit w={55} c="mt-[3px] leading-[15px] text-[#5a5a5a]">Grammarly</Fit>
    </div>
  );
}

function SharingPopup() {
  return (
    <div className="absolute left-[508px] top-[88px] flex h-[33px] w-[388px] items-center border border-[#bbb] bg-[#fbfbfc] shadow">
      <div className="ml-[7px] h-[18px] w-0 border-l-[3px] border-dotted border-[#aaa]" />
      <Svg w={17} h={14} c="ml-[17px]">
        <rect x="1" y="1" width="15" height="12" rx="1.500" stroke="#333" strokeWidth="1.500" />
        <path d="M8.500 11V4.500M6 6.500l2.500-2.500L11 6.500" stroke="#333" strokeWidth="1.500" />
      </Svg>
      <Fit w={187} c="ml-[9px] text-[13px] text-[#202124]">You are sharing your entire screen.</Fit>
      <Slot c="ml-[14px] h-[23px] w-[79px] rounded-[4px] bg-[#0c61e8]">
        <Fit w={69} c="text-[13px] text-white">Stop Sharing</Fit>
      </Slot>
      <div className="ml-[11px] h-[20px] w-[1px] bg-[#ddd]" />
      <div className="ml-[10px] flex h-[21px] w-[21px] items-end justify-center rounded-[3px] bg-[#e2e2e5] pb-[4px]">
        <div className="h-[2px] w-[11px] bg-[#222]" />
      </div>
    </div>
  );
}

const Eq = ({ y, v, a, end }) => (
  <g fill="#f7941d" fontWeight="700" fontSize="15">
    <text x="574" y={y}>{v}</text>
    <text x="584" y={y + 4.500} fontSize="13" textLength="20" lengthAdjust="spacingAndGlyphs">p+1</text>
    <text x="609" y={y} textLength={end - 13 - 609} lengthAdjust="spacingAndGlyphs">{`= round off (${a} + ${v}`}</text>
    <text x={end - 12.500} y={y + 4.500} fontSize="13">p</text>
    <text x={end - 4.500} y={y}>)</text>
  </g>
);

/* Flowchart of the three slope cases on the document page. */
function CaseChart() {
  const cases = [
    [159.500, "Case-01", "If M < 1", "1", 741, "M", 745],
    [306, "Case-02", "If M = 1", "1", 741, "1", 741],
    [452.500, "Case-03", "If M > 1", "1/M", 757, "1", 741],
  ];
  return (
    <svg width="837" height="534" className="block" fontFamily="Liberation Sans" fill="none">
      <text x="141" y="312.800" fontSize="16.500" fontWeight="700" fill="#d31f1a" textLength="97" lengthAdjust="spacingAndGlyphs">Three Cases</text>
      <path d="M253 306h92M290 159v294M289 159.500h56M289 452.500h56" stroke="#1c1c1c" strokeWidth="2" />
      {cases.map(([y, t, u, a, e1, b, e2]) => (
        <g key={t}>
          <ellipse cx="417.500" cy={y} rx="73" ry="37" stroke="#1c1c1c" strokeWidth="1.800" />
          <path d={`M491 ${y}h48`} stroke="#1c1c1c" strokeWidth="2" />
          <path d={`M334 ${y - 5.500}l11 5.500-11 5.500 2-5.500zM535 ${y - 5.500}l11 5.500-11 5.500 2-5.500z`} fill="#111" />
          <rect x="545" y={y - 51} width="238.500" height="101" stroke="#1c1c1c" strokeWidth="1.800" />
          <g fill="#c96a12" fontWeight="700" fontSize="14.500">
            <text x="389" y={y - 3.500} textLength="56" lengthAdjust="spacingAndGlyphs">{t}</text>
            <text x="393" y={y + 13.500} textLength="49" lengthAdjust="spacingAndGlyphs">{u}</text>
          </g>
          <Eq y={y - 15.500} v="X" a={a} end={e1} />
          <Eq y={y + 24.500} v="Y" a={b} end={e2} />
        </g>
      ))}
      <g transform="translate(641 263)">
        <path d="M12.500 0l2.500 3.500h-5zM4 8.500l3.500-2.500v5zM21 8.500l-3.500-2.500v5z" fill="#111" />
        <path d="M9 8.500H7M16 8.500h3M12.500 3v5" stroke="#111" strokeWidth="1.300" />
        <path d="M12.500 8v14l3-2.500 3 6.500 2.500-1.500-3-6h3.500z" fill="#fff" stroke="#111" />
      </g>
    </svg>
  );
}

function Document() {
  return (
    <div className="flex h-[534px] bg-[#e8e6ea]">
      <div className="ml-[275px] h-full w-[838px] overflow-hidden border-r border-[#d5d3d8] bg-white font-['Liberation_Serif'] text-[16px] text-[#222]">
        <div className="-mt-[11px] flex h-[29px] items-start">
          <Fit w={465} c="ml-[97px] leading-[27px]">
            Suppose the current point is (<span className="underline decoration-[#d33] decoration-wavy decoration-1">X<sub className="text-[13px] bottom-[-2px]">p</sub>,</span>{" "}
            <span className="underline decoration-[#d33] decoration-wavy decoration-1">Y<sub className="text-[13px] bottom-[-2px]">p</sub></span>) and the next point is (X<sub className="text-[13px] bottom-[-2px]">p+1</sub>, Y<sub className="text-[13px] bottom-[-2px]">p+1</sub>).
          </Fit>
        </div>
        <div className="mt-[14px] flex h-[20px] items-center">
          <Fit w={363} c="ml-[97px]">Find the next point by following the below three cases-</Fit>
          <div className="h-[18px] w-[1px] bg-black" />
        </div>
        <div className="-mt-[52px]">
          <CaseChart />
        </div>
      </div>
      <div className="ml-auto flex w-[17px] flex-col items-start">
        <Slot c="mt-[2px] h-[15px] w-[15px] border border-[#c4c4c4] bg-white"><Svg w={7} h={4}><path d="M0 4h7L3.500 0z" fill="#666" /></Svg></Slot>
        <div className="mt-[110px] h-[24px] w-[15px] border border-[#b5b5b5] bg-white" />
        <Slot c="mt-auto mb-[2px] h-[15px] w-[15px] border border-[#c4c4c4] bg-white"><Caret /></Slot>
      </div>
    </div>
  );
}

function WordWindow() {
  const menu = [
    ["Insert", 30, "ml-[15px]"], ["Design", 37, "ml-[30px]"], ["Layout", 38, "ml-[29px]"], ["References", 59, "ml-[29px]"],
    ["Mailings", 46, "ml-[30px]"], ["Review", 38, "ml-[30px]"], ["View", 25, "ml-[30px]"], ["Grammarly", 61, "ml-[30px]"],
  ];
  return (
    <div className="relative text-[12px] text-[#3f3f3f]">
      <div className="h-[59px] bg-[#25569c] text-[#e9eef7]">
        <div className="flex h-[34px] items-center">
          <Fit w={176} c="ml-[613px]">Line Drawing Algorithms - Word</Fit>
          <Svg w={14} h={12} c="ml-[443px] -mt-[3px]">
            <path d="M.6.600h12.800v10.800H.6zM1 3.500h12M7 10V5.500M5 7l2-2 2 2" stroke="#dbe4f2" strokeWidth="1.200" />
          </Svg>
          <div className="ml-[35px] -mt-[2px] h-[1px] w-[11px] bg-[#dbe4f2]" />
          <Svg w={11} h={11} c="ml-[36px] -mt-[2px]">
            <path d="M.6 2.600h7.500v7.800H.6zM2.600 2.600v-2h7.800v7.800h-2" stroke="#dbe4f2" strokeWidth="1.200" />
          </Svg>
          <CloseX s={11} sw={1.200} color="#dbe4f2" c="ml-[36px] -mt-[2px]" />
        </div>
        <div className="flex h-[25px] items-center">
          <Fit w={19} c="ml-[20px]">File</Fit>
          <Slot c="ml-[26px] h-full w-[62px] bg-[#f6f6f6]">
            <Fit w={34} c="font-semibold text-[#2b579a]">Home</Fit>
          </Slot>
          {menu.map(([t, w, m]) => (
            <Fit key={t} w={w} c={m}>{t}</Fit>
          ))}
          <Svg w={10} h={15} c="ml-[30px]">
            <path d="M3 10.500V9C0 7 .3 1 5 1s5 6 2 8v1.500zM3.500 13h3" stroke="#dbe4f2" strokeWidth="1.200" />
          </Svg>
          <Fit w={163} c="ml-[8px] text-[#b9cbe6]">Tell me what you want to do...</Fit>
          <Fit w={59} c="ml-[359px]">Anil kumar</Fit>
          <div className="ml-[11px] flex h-full w-[64px] items-center bg-[#133f7c]">
            <Svg w={16} h={17} c="ml-[7px]">
              <circle cx="8" cy="5.500" r="4.300" stroke="#fff" strokeWidth="1.400" />
              <path d="M6 9.500L1.500 15M9 9.500l2 1.500M8 13.500h7M11.500 10v7" stroke="#fff" strokeWidth="1.400" />
            </Svg>
            <Fit w={30} c="ml-[3px] text-white">Share</Fit>
          </div>
        </div>
      </div>
      <div className="flex h-[95px] border-b border-[#d2d2d2] bg-[#f3f3f3]">
        <ClipboardGroup />
        <FontGroup />
        <ParagraphGroup />
        <StylesGroup />
        <EditingGroup />
        <GrammarlyGroup />
        <div className="ml-[16px] flex items-end pb-[6px]">
          <UpChevron color="#555" w={9} />
        </div>
      </div>
      <div className="flex h-[38px] items-center bg-[#e8e6ea]">
        <Svg w={15} h={15} c="ml-[9px]">
          <path d="M1 1h13v13H1z" stroke="#8157a8" strokeWidth="2" fill="#f3eef8" />
          <path d="M1 7h13v2H1zM4 10h7v4H4z" fill="#8157a8" />
          <path d="M6 11h2v3H6z" fill="#fff" />
        </Svg>
      </div>
      <Document />
      <div className="flex h-[23px] items-center border-t border-[#c8c8c8] bg-[#f1f1f1] pb-[2px] text-[11px] text-[#5f5f5f]">
        <Fit w={65} c="ml-[8px]">Page 3 of 10</Fit>
        <Fit w={54} c="ml-[19px]">755 words</Fit>
        <Svg w={16} h={13} c="ml-[20px]">
          <path d="M1 1h6v10H1zM8 1h6M8 1v11M8 11h2M10 5l5 5M15 5l-5 5" stroke="#666" strokeWidth="1.200" />
        </Svg>
        <Svg w={14} h={12} c="ml-[935px]">
          <path d="M7 2v10M1 1l6 1 6-1v9l-6 1-6-1zM3 4h2M3 6h2M3 8h2M9 4h2M9 6h2M9 8h2" stroke="#666" />
        </Svg>
        <div className="ml-[13px] -mb-[2px] flex h-[22px] w-[38px] items-center justify-center bg-[#cacaca]">
          <Svg w={15} h={13}>
            <path d="M.5.500h14v12H.5zM2.500 3h10M2.500 5h10M2.500 7h10M2.500 9h10" stroke="#666" />
          </Svg>
        </div>
        <Svg w={15} h={14} c="ml-[13px]">
          <path d="M.5.500h11v5M.5.500v11h6M2.500 3h7M2.500 5h5M2.500 7h4" stroke="#777" />
          <circle cx="10.500" cy="9.500" r="3.800" fill="#777" />
          <path d="M7 9h7M10.500 6v7" stroke="#ccc" strokeWidth=".6" />
        </Svg>
        <div className="ml-[16px] h-[2px] w-[7px] bg-[#555]" />
        <div className="ml-[4px] flex h-[12px] w-[104px] items-center justify-center bg-[linear-gradient(#0000_5.500px,#aaa_5.500px,#aaa_6.500px,#0000_6.500px)]">
          <div className="h-[11px] w-[4px] bg-[#555]" />
        </div>
        <Svg w={8} h={8} c="ml-[3px]">
          <path d="M4 0v8M0 4h8" stroke="#555" strokeWidth="1.600" />
        </Svg>
        <Fit w={28} c="ml-[16px]">100%</Fit>
      </div>
      <SharingPopup />
    </div>
  );
}

const Task = ({ c, children, on, sel }) => (
  <div className={"flex h-full shrink-0 flex-col items-center " + c + (sel ? " bg-[#4c5b68]" : "")}>
    <div className="flex flex-1 items-center">{children}</div>
    <div className={"h-[1.500px] w-full " + (on ? "bg-[#76b9ed]" : "")} />
  </div>
);

function SharedTaskbar() {
  return (
    <div className="flex h-[40px] items-center bg-[linear-gradient(90deg,#1d3644,#20354a_50%,#1c2e4c_75%,#1a2947)]">
      <Slot c="w-[49px]"><WinLogo s={17} /></Slot>
      <div className="flex h-full w-[354px] items-center border-t border-[#c5c9cc] bg-[#f3f3f5] text-[15px] text-[#333]">
        <Slot c="ml-[12px]"><Magnifier s={17} /></Slot>
        <Fit w={132} c="ml-[13px]">Type here to search</Fit>
      </div>
      <Task c="ml-[4px] w-[42px]"><Ring s={18} /></Task>
      <Task c="ml-[10px] w-[42px]"><IE /></Task>
      <Task on c="ml-[9px] w-[42px]"><Folder s={23} /></Task>
      <Task on c="ml-[8px] w-[42px]">
        <Svg w={27} h={27}>
          <path d="M11 5h13v12H11z" fill="#fff" />
          <path d="M13 11l3 3 6-7" stroke="#1473c8" strokeWidth="2" />
          <path d="M0 3l14-3v24L0 21z" fill="#0f6fc4" />
          <text x="7" y="16.500" textAnchor="middle" fontSize="12" fontWeight="700" fill="#fff" fontFamily="Open Sans">O</text>
          <path d="M11 14h16v12H11z" fill="#e8b06f" />
          <path d="M11 15l8 6 8-6" stroke="#fff" strokeWidth="1.200" />
        </Svg>
      </Task>
      <Task c="ml-[8px] w-[42px]"><Edge s={25} /></Task>
      <Task on c="ml-[9px] w-[42px]"><Firefox s={25} /></Task>
      <Task on c="ml-[8px] w-[42px]"><Paint s={25} /></Task>
      <Task on c="ml-[9px] w-[42px]">
        <OfficeOld letter="P" color="#d24726">
          <circle cx="17" cy="9" r="3.500" fill="#d24726" />
          <path d="M14 15h7M14 18h7" stroke="#d24726" strokeWidth="1.500" />
        </OfficeOld>
      </Task>
      <Task on sel c="ml-[4px] w-[50px]">
        <OfficeOld letter="W" color="#2155a8">
          <path d="M14 7h6M14 10h6M14 13h6M14 16h6M14 19h6" stroke="#6d8fc4" />
        </OfficeOld>
      </Task>
      <Slot c="ml-auto w-[24px]"><UpChevron w={13} /></Slot>
      <Slot c="w-[26px]"><Battery /></Slot>
      <Slot c="w-[25px]"><Wifi s={14} /></Slot>
      <Slot c="w-[24px]">
        <Svg w={17} h={16}>
          <rect y="2" width="16" height="9" rx="1.500" fill="#c9d0d4" />
          <path d="M5 10l3.500 4L16 5" stroke="#3fae3d" strokeWidth="3.500" />
        </Svg>
      </Slot>
      <Slot c="w-[24px]"><Volume /></Slot>
      <div className="ml-[7px] flex flex-col items-center pb-[1px] text-[12px] text-[#f0f3f6]">
        <Fit w={51} c="leading-[19px]">11:18 AM</Fit>
        <Fit w={53} c="leading-[18px]">8/10/2021</Fit>
      </div>
      <Slot c="ml-[19px]"><Notif s={17} /></Slot>
      <div className="ml-[20px] mr-[4px] h-full w-[1px] bg-[#4a566c]" />
    </div>
  );
}

function Stage() {
  return (
    <div className="relative flex h-[941px] w-[1445px] flex-col bg-[#262626]">
      <div className="flex h-[78px]">
        <div className="relative mt-[11px] flex h-[54px] w-[66px] items-center rounded-r-[26px] border border-l-0 border-[#cfcfcf] bg-[#0a0a0a]">
          <Svg w={31} h={18} c="ml-[25px] -mt-[2px]">
            <path d="M0 1h31M0 9h31M0 17h31" stroke="#e8e8e8" strokeWidth="1.400" />
          </Svg>
          <div className="absolute left-[56px] top-[26px] flex h-[26px] w-[26px] items-center justify-center rounded-full bg-[#222]">
            <Rec color="#fff" w={20} />
          </div>
        </div>
        <Fit w={240} c="relative ml-[14px] mt-[27px] text-[16.500px] leading-[24px] text-white">Anil Kumar is sharing content</Fit>
      </div>
      <div className="ml-[19px] w-[1405px]">
        <WordWindow />
        <SharedTaskbar />
      </div>
      <div className="flex flex-1 items-start">
        <div className="relative ml-[593px] mt-[10px] flex h-[54px] w-[54px] items-center justify-center rounded-full bg-[#efefef]">
          <Person w={27} h={31} />
          <Svg w={26} h={26} c="absolute left-[35px] top-[32px]">
            <circle cx="13" cy="13" r="13" fill="#1c1c1c" />
            <circle cx="13" cy="13" r="10" fill="#33dd78" />
            <path d="M8 13l4 4 7-8" stroke="#17442a" strokeWidth="1.600" />
          </Svg>
        </div>
        <Slot c="ml-[13px] mt-[10px] h-[54px] w-[54px] rounded-full bg-[#101010]">
          <Svg w={28} h={31}>
            <rect x="7" y="1" width="13" height="23" rx="6.500" stroke="#fff" strokeWidth="1.400" />
            <path d="M4 12v6c0 12 19 12 19 0v-6M13.500 27v2.500M9 30h9M27 2L0 29" stroke="#fff" strokeWidth="1.400" />
          </Svg>
        </Slot>
        <Slot c="ml-[12px] mt-[10px] h-[54px] w-[54px] rounded-full bg-[#101010]">
          <Svg w={32} h={28}>
            <path d="M1 5h23v18H1zM24 11l6-4v15l-6-5M29 1L3 27" stroke="#fff" strokeWidth="1.400" />
          </Svg>
        </Slot>
        <Slot c="ml-[12px] mt-[10px] h-[54px] w-[54px] rounded-full bg-[#101010]">
          <Svg w={30} h={31}>
            <ellipse cx="12" cy="8" rx="6.500" ry="7" stroke="#fff" strokeWidth="1.400" />
            <path d="M7.500 13.500C3 15 0 19 1 25q.5 2.500 4 2.500M5 20.500c-1 3-.5 6 0 9h16c.5-4 1.500-7 1.500-11L29 6c1.500-4.500-3-6-5-2.500L18.500 14l-2-1" stroke="#fff" strokeWidth="1.400" />
          </Svg>
        </Slot>
        <div className="relative ml-[470px] flex h-[67px] w-[119px] flex-col justify-end bg-[#363636]">
          <div className="absolute left-[34px] top-[9px] flex h-[50px] w-[50px] items-end justify-center overflow-hidden rounded-full border border-[#777] bg-[#1f1f1f]">
            <Svg w={34} h={42}>
              <ellipse cx="17" cy="17" rx="12" ry="17" fill="#686868" />
              <path d="M10 30h14l2 12H8z" fill="#686868" />
            </Svg>
          </div>
          <div className="relative flex h-[22px] w-[100px] items-center bg-[#292929]/95">
            <Fit w={80} c="ml-[10px] text-[14px] font-semibold text-white">Anil Kumar</Fit>
          </div>
        </div>
      </div>
      <div className="absolute left-[13px] top-[80px] flex h-[54px] w-[54px] items-center rounded-full bg-black/70">
        <Svg w={31} h={31} c="ml-[11px]">
          <path d="M13 25H1V1h28v14M6 6.500h18M6 12h7M6 17h5" stroke="#e6eaf0" strokeWidth="1.500" />
          <circle cx="19" cy="18" r="7" stroke="#fff" strokeWidth="1.500" />
          <path d="M24 23l6 7" stroke="#fff" strokeWidth="1.500" />
        </Svg>
        <Svg w={4} h={6} c="ml-[5px]"><path d="M0 0l4 3-4 3z" fill="#fff" /></Svg>
      </div>
    </div>
  );
}

/* ---------- chat panel ---------- */
const MESSAGES = [
  ["SRIKALYAN KOPALLE", 169, "yes sir", 51, "11:18 AM"],
  ["ANUBHAV GAHLOT", 157, "yes sir", 51, "11:18 AM"],
  ["Ankit Yadav", 95, "yes sir", 51, "11:18 AM"],
  ["Sthitapragyan Das", 149, "yes sir", 51, "11:18 AM"],
  ["Rajat Mishra", 101, "yes sir clear", 95, "11:23 AM"],
  ["Tanishq Singh", 114, "yes sir", 51, "11:23 AM"],
  ["Sthitapragyan Das", 149, "yes sir", 51, "11:23 AM"],
  ["TANU SHARMA", 122, "yes sir", 51, "11:23 AM"],
];

function Chat() {
  return (
    <div className="flex h-[941px] w-[475px] flex-col bg-white text-[#262626]">
      <div className="flex h-[63px] items-center border-b border-[#cdcdcd]">
        <Svg w={10} h={21} c="ml-[30px]">
          <path d="M9 1L1 10.500 9 20" stroke="#444" strokeWidth="1.400" />
        </Svg>
        <Fit w={89} c="ml-[22px] text-[18px] font-semibold">Everyone</Fit>
      </div>
      <div className="flex h-[27px] items-center border-b border-[#cdcdcd]">
        <div className="ml-[30px]"><Rec /></div>
        <Fit w={227} c="ml-[10px] text-[15px] text-[#333]">Recording messages in this chat.</Fit>
      </div>
      <div className="flex h-[663px] border-b border-[#cdcdcd]">
        <div className="flex-1 overflow-hidden">
          {MESSAGES.map(([n, nw, m, mw, t], i) => (
            <div key={i} className="flex h-[84.400px]">
              <div className="ml-[30px] mt-[1px] flex h-[52px] w-[53px] items-center justify-center rounded-full bg-[#efefef]">
                <Person w={28} h={31} />
              </div>
              <div className="-mt-[1px] ml-[20px]">
                <Fit w={nw} c="text-[17.500px] leading-[28px] text-[#6b6b6b]">{n}</Fit>
                <Fit w={mw} c="mt-[3px] text-[17px] leading-[28px]">{m}</Fit>
              </div>
              <Fit w={55} c="ml-auto mr-[32px] mt-[4px] text-[12px] leading-[20px] font-semibold text-[#6b6b6b]">{t}</Fit>
            </div>
          ))}
        </div>
        <div className="flex w-[21px] flex-col items-center bg-[#f0f0f0]">
          <Svg w={9} h={5} c="mt-[9px]"><path d="M0 5h9L4.500 0z" fill="#444" /></Svg>
          <div className="mt-[525px] h-[102px] w-[17px] bg-[#c1c1c1]" />
          <Svg w={9} h={5} c="mt-[7px]"><path d="M0 0h9L4.500 5z" fill="#a3a3a3" /></Svg>
        </div>
      </div>
      <div className="flex h-[114px] flex-col border-b border-[#c9c9c9] bg-[#f8f8f8]">
        <div className="ml-[10px] mt-[10px] flex h-[51px] w-[455px] items-center rounded-[3px] border border-[#cdcdcd] bg-white">
          <Fit w={120} c="ml-[12px] text-[16.500px] text-[#6b6b6b]">Say something</Fit>
        </div>
        <div className="mt-[12px] flex h-[30px] items-center">
          <Slot c="ml-[10px] w-[40px] font-['Liberation_Serif'] text-[28px] leading-none font-bold [-webkit-text-stroke:0.800px_#222]">B</Slot>
          <Slot c="ml-[10px] w-[40px]">
            <Svg w={14} h={20}>
              <path d="M4 1h9M1 19h9M9 1L5 19" stroke="#222" strokeWidth="1.800" />
            </Svg>
          </Slot>
          <Slot c="ml-[10px] w-[40px]">
            <Svg w={18} h={21}>
              <path d="M4 1v8c0 7 10 7 10 0V1M1.500 1h4M12.500 1h4M1 20h16" stroke="#222" strokeWidth="1.600" />
            </Svg>
          </Slot>
          <Slot c="ml-[10px] w-[40px]">
            <Svg w={20} h={21}>
              <path d="M12 2.500A8.500 8.500 0 1 0 17.500 9" stroke="#222" strokeWidth="2" />
              <circle cx="6.500" cy="8.500" r="1.500" fill="#222" />
              <circle cx="12" cy="8.500" r="1.500" fill="#222" />
              <path d="M5 12.500c2 4 6.500 4 8.500 0z" fill="#222" />
              <path d="M16.500 0v7M13 3.500h7" stroke="#222" strokeWidth="1.800" />
            </Svg>
          </Slot>
          <Fit w={43} c="ml-auto mr-[38px] text-[17px] font-semibold text-[#757575]">Send</Fit>
        </div>
      </div>
      <div className="flex h-[74px] bg-[#f8f8f8]">
        <div className="flex h-full w-[101px] items-center justify-center border-r border-b-[3px] border-r-[#c9c9c9] border-b-[#9a2eb5] bg-white pt-[3px]">
          <Svg w={31} h={31}>
            <path d="M2.500 29.500Q4 26 2.700 22A13.500 13.500 0 1 1 9 27.500Q6 30 2.500 29.500z" stroke="#9a2eb5" strokeWidth="1.600" />
            <path d="M17 6c4 .5 7 3.500 7.500 8" stroke="#9a2eb5" strokeWidth="1.400" />
          </Svg>
        </div>
        <div className="relative flex w-[99px] items-center justify-center">
          <div className="absolute top-[5px] h-[6px] w-[14px] border-y border-[#777]"><div className="mt-[1.500px] h-[1px] bg-[#777]" /></div>
          <Svg w={31} h={31}>
            <circle cx="21" cy="6.500" r="5.500" stroke="#222" strokeWidth="1.400" />
            <circle cx="9" cy="11" r="5.500" stroke="#222" strokeWidth="1.400" />
            <path d="M5.500 15.500C2 17 1 20 1 29.500h18V22c0-4-2-6-5-6.500M18 11.500l-3 2M24.500 11c4 1.500 5.500 5 5.500 10.500H19" stroke="#222" strokeWidth="1.400" />
          </Svg>
          <div className="absolute left-[49px] top-[47px] flex h-[17px] w-[31px] items-center justify-center rounded-full bg-[#222] text-[13px] font-bold text-white">45</div>
        </div>
        <Slot c="w-[100px]">
          <Svg w={31} h={28}>
            <path d="M12 2H3.500Q1 2 1 4.500v20Q1 27 3.500 27h21Q27 27 27 24.500V15" stroke="#222" strokeWidth="1.400" />
            <path d="M8 20C9 11 15 7 22 7h7M23 1l7 6-7 6" stroke="#222" strokeWidth="1.400" />
          </Svg>
        </Slot>
        <Slot c="w-[100px]">
          <Svg w={31} h={31} vb="-15.500 -15.500 31 31">
            <path d="M-2.500-14.500h5l1 4 2.500 1 3.500-2 3.800 3.800-2 3.500 1 2.500 3 .7v3l-3 1-1 2.500 2 3.500-3.800 3.800-3.500-2-2.500 1-1 3h-5l-1-3-2.500-1-3.500 2-3.800-3.800 2-3.500-1-2.500-3-1v-3l3-.7 1-2.500-2-3.500 3.800-3.800 3.500 2 2.500-1z" stroke="#222" strokeWidth="1.400" strokeLinejoin="round" />
            <circle r="4.800" stroke="#222" strokeWidth="1.400" />
          </Svg>
        </Slot>
        <div className="ml-[9px] mt-[11px] flex h-[54px] w-[66px] items-center rounded-l-full bg-[#c56dd4]">
          <Svg w={26} h={26} c="ml-[14px]">
            <path d="M2 2l22 22M24 2L2 24" stroke="#9a2eb5" strokeWidth="4.500" strokeLinecap="round" />
            <path d="M2 2l22 22M24 2L2 24" stroke="#fff" strokeWidth="2" strokeLinecap="round" />
          </Svg>
        </div>
      </div>
    </div>
  );
}

const HostTask = ({ c = "w-[50px]", children, on, sel }) => (
  <div className={"flex h-full shrink-0 flex-col items-center " + c + (sel ? " bg-[#4a4a4a]" : "")}>
    <div className="flex flex-1 items-center">{children}</div>
    <div className={"h-[3px] w-full " + (on ? "bg-[#76b9ed]" : "")} />
  </div>
);

function HostTaskbar() {
  return (
    <div className="flex h-[50px] items-center bg-[#1e1e1e] text-white">
      <Slot c="w-[60px]"><WinLogo s={20} /></Slot>
      <div className="flex h-full w-[430px] items-center border border-[#c4c4c4] bg-[#f2f2f2] text-[18px] text-[#333]">
        <Slot c="ml-[14px]"><Magnifier s={20} /></Slot>
        <Fit w={163} c="ml-[15px]">Type here to search</Fit>
      </div>
      <Slot c="w-[60px]"><Ring s={21} /></Slot>
      <Slot c="w-[60px]">
        <Svg w={21} h={20}>
          <path d="M1 0v3.500h11V0M1 20v-3.500h11V20M1 5.500h11v9H1zM18.500 0v4M18.500 10v10" stroke="#fff" strokeWidth="1.300" />
          <rect x="17" y="5.500" width="3" height="3" fill="#fff" />
        </Svg>
      </Slot>
      <div className="ml-[6px] h-[26px] w-[4px] border-x border-[#555]" />
      <HostTask c="ml-[18px] w-[52px]"><Edge s={30} /></HostTask>
      <HostTask on c="ml-[11px] w-[51px]"><Folder s={28} /></HostTask>
      <HostTask c="ml-[11px] w-[51px]"><Store /></HostTask>
      <HostTask c="ml-[11px] w-[51px]"><Mcafee /></HostTask>
      <HostTask c="ml-[11px] w-[51px]"><MailApp /></HostTask>
      <HostTask c="ml-[11px] w-[51px]"><Firefox s={29} /></HostTask>
      <HostTask c="ml-[11px] w-[51px]"><Office /></HostTask>
      <HostTask on sel c="ml-[6px] w-[61px]"><Chrome /></HostTask>
      <HostTask on c="ml-[6px] w-[51px]"><Notepad /></HostTask>
      <HostTask on c="ml-[11px] w-[51px]"><WordNew /></HostTask>
      <HostTask on c="ml-[11px] w-[51px]"><Paint s={29} /></HostTask>
      <div className="ml-[18px] flex h-[25px] w-[61px] items-center justify-center border-[3px] border-white bg-[#169c45]">
        <Fit w={44} c="text-[17px] leading-[19px]">100%</Fit>
      </div>
      <div className="h-[12px] w-[3px] bg-white" />
      <Svg w={11} h={19} c="ml-[8px]">
        <path d="M2 0h2v5h3V0h2v5h2v5q0 3-4 4v5H4v-5q-4-1-4-4V5h2z" fill="#fff" />
      </Svg>
      <Svg w={28} h={26} c="ml-[35px]">
        <circle cx="14" cy="12" r="12" fill="#fbb936" />
        <circle cx="12" cy="9" r="7" fill="#ffd75e" opacity=".7" />
        <path d="M0 19c4-1 5-5 9-5 3 0 4 1 5 2 3-2 8-1 9 2l5 1c-8 2-22 2-28 0z" fill="#e4d7c6" />
        <path d="M6 21h18c-4 2-14 2-18 0z" fill="#b39b83" />
      </Svg>
      <Fit w={38} c="ml-[11px] text-[17px]">31°C</Fit>
      <Slot c="ml-[14px] w-[30px]"><UpChevron w={17} /></Slot>
      <Slot c="w-[31px]">
        <Svg w={15} h={19}>
          <rect x="1" y="4.500" width="9" height="10" rx="1" stroke="#fff" strokeWidth="1.300" />
          <path d="M10 8l4-2.500v8L10 11M3 1.500q3-1.500 7 0M3 17.500q3 1.500 7 0" stroke="#fff" strokeWidth="1.200" />
        </Svg>
      </Slot>
      <Slot c="w-[28px]"><Wifi /></Slot>
      <Slot c="w-[31px]">
        <Svg w={21} h={20}>
          <path d="M4 13a4 4 0 0 1 0-7 6 6 0 0 1 11-1 4 4 0 0 1 3 8z" fill="#9a9a9a" />
          <circle cx="14.500" cy="13" r="6" fill="#d9242c" />
          <path d="M12 10.500l5 5M17 10.500l-5 5" stroke="#fff" strokeWidth="1.500" />
        </Svg>
      </Slot>
      <Slot c="w-[29px]"><Battery /></Slot>
      <Slot c="w-[30px]"><Volume /></Slot>
      <Fit w={29} c="ml-[9px] text-[15px]">ENG</Fit>
      <div className="ml-[17px] flex flex-col items-center pb-[1px] text-[15px]">
        <Fit w={34} c="leading-[23px]">11:23</Fit>
        <Fit w={74} c="leading-[22px]">10-08-2021</Fit>
      </div>
      <Svg w={21} h={22} c="ml-[24px]">
        <path d="M0 1h20v16h-5l-3 3-3-3H0z" fill="#fff" />
        <path d="M4 5h12M4 8.500h12M4 12h7" stroke="#222" strokeWidth="1.400" />
        <path d="M16 12.500a4.500 4.500 0 1 0 4.500 6A4 4 0 0 1 16 12.500z" fill="#fff" stroke="#1e1e1e" strokeWidth="1.300" />
      </Svg>
      <div className="ml-[24px] h-full w-[1px] bg-[#6a6a6a]" />
    </div>
  );
}

export default function App() {
  return (
    <div className="flex h-[1080px] w-[1920px] flex-col overflow-hidden bg-[#262626] font-['Open_Sans',sans-serif]">
      <TabStrip />
      <Toolbar />
      <div className="flex h-[941px]">
        <Stage />
        <Chat />
      </div>
      <HostTaskbar />
    </div>
  );
}
